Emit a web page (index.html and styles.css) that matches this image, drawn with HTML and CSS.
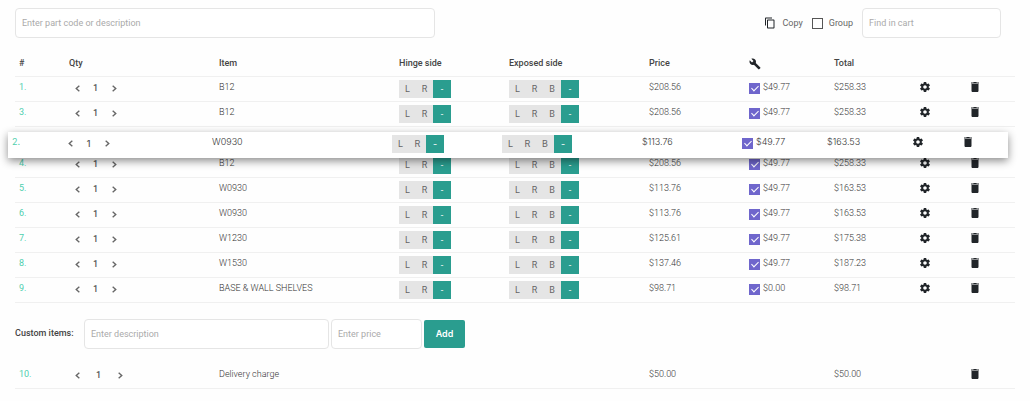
FILE: index.html
```html
<!DOCTYPE html>
<html lang="en">
  <head>
    <meta charset="UTF-8" />
    <meta name="viewport" content="width=device-width, initial-scale=1.0" />
    <title>Cart</title>

    <link rel="stylesheet" href="styles.css">
  </head>
  <body>
    <svg class="sprite" aria-hidden="true">
      <symbol id="copy" viewBox="0 0 24 24">
        <path d="M16 1H4c-1.100 0-2 .9-2 2v14h2V3h12V1zm3 4H8c-1.100 0-2 .9-2 2v14c0 1.100.9 2 2 2h11c1.100 0 2-.9 2-2V7c0-1.100-.9-2-2-2zm0 16H8V7h11v14z" />
      </symbol>
      <symbol id="wrench" viewBox="0 0 24 24">
        <path d="M22.7 19l-9.1-9.1c.9-2.3.4-5-1.5-6.9-2-2-5-2.4-7.4-1.3L9 6 6 9 1.6 4.7C.4 7.1.9 10.1 2.9 12.1c1.9 1.9 4.6 2.4 6.9 1.5l9.1 9.1c.4.4 1 .4 1.4 0l2.3-2.3c.5-.4.5-1.1.1-1.4z" />
      </symbol>
      <symbol id="gear" viewBox="0 0 24 24">
        <path d="M19.43 12.98c.04-.32.07-.64.07-.98s-.03-.66-.07-.98l2.11-1.65c.19-.15.24-.42.12-.64l-2-3.46c-.12-.22-.39-.3-.61-.22l-2.49 1c-.52-.4-1.08-.73-1.69-.98l-.38-2.65C14.46 2.18 14.25 2 14 2h-4c-.25 0-.46.18-.49.42l-.38 2.65c-.61.25-1.17.59-1.69.98l-2.49-1c-.23-.09-.49 0-.61.22l-2 3.46c-.13.22-.07.49.12.64l2.11 1.65c-.04.32-.07.65-.07.98s.03.66.07.98l-2.11 1.65c-.19.15-.24.42-.12.64l2 3.46c.12.22.39.3.61.22l2.49-1c.52.4 1.08.73 1.69.98l.38 2.65c.03.24.24.42.49.42h4c.25 0 .46-.18.49-.42l.38-2.65c.61-.25 1.17-.59 1.69-.98l2.49 1c.23.09.49 0 .61-.22l2-3.46c.12-.22.07-.49-.12-.64l-2.11-1.65zM12 15.5c-1.93 0-3.5-1.57-3.5-3.5s1.57-3.5 3.5-3.5 3.5 1.57 3.5 3.5-1.57 3.5-3.5 3.5z" />
      </symbol>
      <symbol id="trash" viewBox="0 0 24 24">
        <path d="M5 19.500C5 21 6 22 7.500 22h9c1.500 0 2.500-1 2.500-2.500V6H5v13.500zM20 3h-4.500l-1-1h-5l-1 1H4v2h16V3z" />
      </symbol>
      <symbol id="left" viewBox="0 0 24 24">
        <path d="M17 7l-2-2-8 7 8 7 2-2-5.500-5z" />
      </symbol>
      <symbol id="right" viewBox="0 0 24 24">
        <path d="M7 7l2-2 8 7-8 7-2-2 5.500-5z" />
      </symbol>
    </svg>

    <div class="toolbar">
      <input class="field search" type="text" placeholder="Enter part code or description" aria-label="Part code or description" />
      <div class="tools">
        <button class="copy"><svg class="icon"><use href="#copy" /></svg>Copy</button>
        <label class="group"><input class="check" type="checkbox" />Group</label>
        <input class="field find" type="text" placeholder="Find in cart" aria-label="Find in cart" />
      </div>
    </div>

    <table class="cart">
      <colgroup>
        <col class="c-num"><col class="c-qty"><col class="c-item"><col class="c-hinge"><col class="c-exposed">
        <col class="c-price"><col class="c-build"><col class="c-total"><col class="c-action"><col class="c-action">
      </colgroup>
      <thead>
        <tr>
          <th>#</th>
          <th>Qty</th>
          <th>Item</th>
          <th>Hinge side</th>
          <th>Exposed side</th>
          <th>Price</th>
          <th aria-label="Assembly"><svg class="icon"><use href="#wrench" /></svg></th>
          <th>Total</th>
          <th></th>
          <th></th>
        </tr>
      </thead>
      <tbody id="items"></tbody>
    </table>

    <form class="custom">
      <label for="description">Custom items:</label>
      <input class="field description" id="description" type="text" placeholder="Enter description" />
      <input class="field price" type="text" placeholder="Enter price" aria-label="Price" />
      <button class="add" type="button">Add</button>
    </form>

    <table class="cart custom-cart">
      <colgroup>
        <col class="c-num"><col class="c-qty"><col class="c-item"><col class="c-hinge"><col class="c-exposed">
        <col class="c-price"><col class="c-build"><col class="c-total"><col class="c-action"><col class="c-action">
      </colgroup>
      <tbody id="custom-items"></tbody>
    </table>

    <script src="cart.js"></script>
  </body>
</html>
```
FILE: styles.css
```css
*,
*::before,
*::after {
  box-sizing: border-box;
  margin: 0;
  padding: 0;
}

body {
  padding: 8px 15px;
  background: #fefefe;
  color: #333;
  font-family: Roboto, "Liberation Sans", sans-serif;
  font-size: 9px;
  font-weight: 300;
  line-height: 16px;
}

button,
input {
  border: none;
  background: none;
  color: inherit;
  font: inherit;
}

button {
  cursor: pointer;
}

.sprite {
  display: none;
}

.icon {
  display: block;
  width: 12px;
  height: 12px;
  fill: #212529;
}

.field {
  height: 30px;
  padding: 0 6px 1px;
  border: 1px solid #e5e5e5;
  border-radius: 4px;
  background: #fff;
}

.field::placeholder {
  color: #aaa;
  font-weight: 400;
}

.check {
  appearance: none;
  flex: none;
  display: grid;
  place-items: center;
  width: 11px;
  height: 11px;
  border: 1px solid #555;
}

.check:checked {
  border-color: #6f66cc;
  background: #6f66cc;
}

.check:checked::after {
  content: "";
  width: 4px;
  height: 7px;
  margin-bottom: 2px;
  border: solid #fff;
  border-width: 0 1px 1px 0;
  transform: rotate(45deg);
}

/* toolbar */

.toolbar {
  display: flex;
  justify-content: space-between;
}

.search {
  width: 42%;
}

.tools {
  display: flex;
  align-items: center;
  gap: 9px;
  margin-right: 14px;
}

.copy,
.group {
  display: flex;
  align-items: center;
  gap: 6px;
  color: #666;
  font-weight: 400;
}

.find {
  width: 139px;
}

/* cart */

.cart {
  width: 100%;
  margin-top: 10px;
  border-spacing: 0;
  table-layout: fixed;
}

.c-num {
  width: 5%;
}

.c-qty {
  width: 15%;
}

.c-item {
  width: 18%;
}

.c-hinge {
  width: 11%;
}

.c-exposed {
  width: 14%;
}

.c-price {
  width: 10%;
}

.c-build,
.c-total {
  width: 8.5%;
}

.c-action {
  width: 5%;
}

th,
td {
  border-bottom: 1px solid #f0f0f0;
  text-align: left;
  vertical-align: top;
  white-space: nowrap;
}

th {
  height: 29px;
  padding: 7px 4px 0;
  color: #444;
  font-weight: 500;
}

th .icon {
  margin-top: 3px;
}

td {
  height: 25px;
  padding: 2px 4px 0;
}

td:first-child {
  color: #4fcfae;
  font-weight: 400;
}

.qty {
  display: flex;
}

.qty button {
  display: grid;
  place-items: center;
  width: 16px;
  height: 18px;
}

.qty .icon {
  width: 11px;
  height: 11px;
  fill: #666;
}

.qty input {
  width: 21px;
  height: 18px;
  color: #555;
  font-weight: 500;
  text-align: center;
}

.custom-cart .qty input {
  width: 27px;
}

.sides {
  display: flex;
  margin-top: 1px;
}

.sides button {
  width: 17px;
  height: 18px;
  background: #e5e5e5;
  color: #666;
  font-weight: 400;
}

.sides button:nth-child(3) {
  width: 18px;
}

.sides .active {
  width: 18px;
  background: #2a9d8f;
  color: #fff;
}

.build {
  display: flex;
  align-items: center;
  gap: 3px;
}

.build .check {
  margin-top: 2px;
}

.action {
  display: block;
  padding-top: 2px;
}

.dragging {
  position: relative;
  z-index: 1;
  background: #fff;
  box-shadow: 0 3px 8px rgba(0, 0, 0, 0.45);
  font-family: Inter, Roboto, sans-serif;
  transform: translate(-7px, 5px);
}

.dragging td {
  height: 26px;
  border-color: transparent;
}

/* custom items */

.custom {
  display: flex;
  align-items: center;
  margin-top: 16px;
}

.custom label {
  width: 69px;
  padding-bottom: 2px;
  color: #444;
  font-weight: 500;
}

.custom .description {
  width: 245px;
  margin-right: 2px;
}

.custom .price {
  width: 91px;
  margin-right: 2px;
}

.add {
  width: 41px;
  height: 28px;
  border-radius: 2px;
  background: #2a9d8f;
  color: #fff;
  font-family: Inter, Roboto, sans-serif;
  font-size: 9px;
  font-weight: 600;
}

.custom-cart {
  margin-top: 15px;
}
```
FILE: cart.js
```js
const items = [
  { id: 1, name: "B12", price: "208.56", build: "49.77", total: "258.33" },
  { id: 3, name: "B12", price: "208.56", build: "49.77", total: "258.33" },
  { id: 2, name: "W0930", price: "113.76", build: "49.77", total: "163.53", dragging: true },
  { id: 4, name: "B12", price: "208.56", build: "49.77", total: "258.33" },
  { id: 5, name: "W0930", price: "113.76", build: "49.77", total: "163.53" },
  { id: 6, name: "W0930", price: "113.76", build: "49.77", total: "163.53" },
  { id: 7, name: "W1230", price: "125.61", build: "49.77", total: "175.38" },
  { id: 8, name: "W1530", price: "137.46", build: "49.77", total: "187.23" },
  { id: 9, name: "BASE &amp; WALL SHELVES", price: "98.71", build: "0.00", total: "98.71" },
];

const customItems = [
  { id: 10, name: "Delivery charge", price: "50.00", total: "50.00", custom: true },
];

function icon(name) {
  return `<svg class="icon"><use href="#${name}" /></svg>`;
}

function sides(options) {
  const buttons = options.map((o) => `<button>${o}</button>`).join("");
  return `<div class="sides">${buttons}<button class="active">-</button></div>`;
}

function row(item) {
  const build = `<label class="build"><input class="check" type="checkbox" checked />$${item.build}</label>`;
  const settings = `<button class="action" aria-label="Settings">${icon("gear")}</button>`;

  return `
    <tr class="${item.dragging ? "dragging" : ""}">
      <td>${item.id}.</td>
      <td>
        <div class="qty">
          <button aria-label="Less">${icon("left")}</button>
          <input type="text" value="1" aria-label="Quantity" />
          <button aria-label="More">${icon("right")}</button>
        </div>
      </td>
      <td>${item.name}</td>
      <td>${item.custom ? "" : sides(["L", "R"])}</td>
      <td>${item.custom ? "" : sides(["L", "R", "B"])}</td>
      <td>$${item.price}</td>
      <td>${item.custom ? "" : build}</td>
      <td>$${item.total}</td>
      <td>${item.custom ? "" : settings}</td>
      <td><button class="action" aria-label="Delete">${icon("trash")}</button></td>
    </tr>`;
}

document.getElementById("items").innerHTML = items.map(row).join("");
document.getElementById("custom-items").innerHTML = customItems.map(row).join("");
```
